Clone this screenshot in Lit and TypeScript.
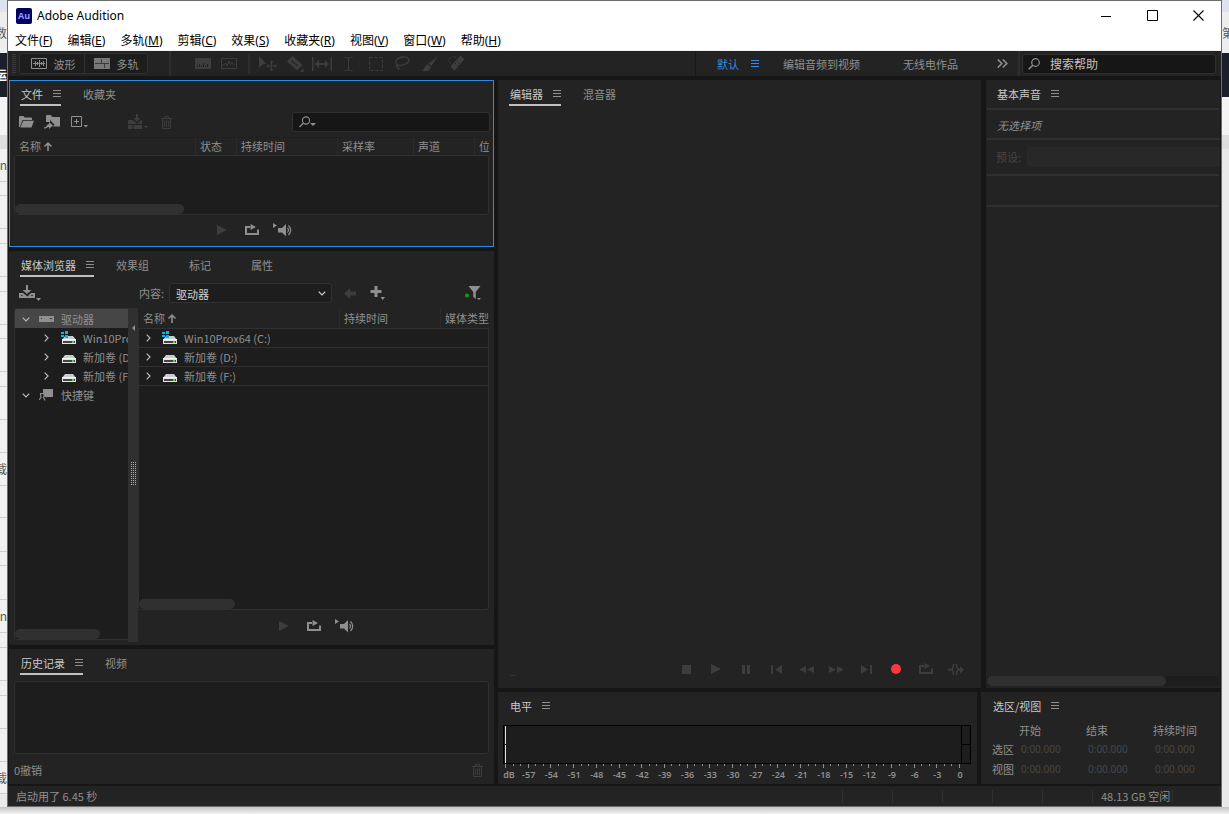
import { LitElement, html, svg, css, TemplateResult } from "lit";
import { customElement, state } from "lit/decorators.js";
import { classMap } from "lit/directives/class-map.js";

const glyph = (w: number, h: number, body: TemplateResult) =>
  html`<svg class="glyph" width=${w} height=${h} viewBox="0 0 ${w} ${h}" fill="currentColor" aria-hidden="true">${body}</svg>`;

const icons = {
  menu: glyph(8, 8, svg`<path d="M0 0h8v1H0zM0 3h8v1H0zM0 6h8v1H0z"/>`),
  logo: html`<svg width="16" height="16" viewBox="0 0 16 16" role="img" aria-label="Audition">
    <rect width="16" height="16" rx="2" fill="#00005b"/>
    <text x="8" y="11" text-anchor="middle" font-family="Open Sans, sans-serif" font-size="9" font-weight="700" fill="#9999ff">Au</text></svg>`,
  minimize: glyph(10, 10, svg`<path d="M0 5h10v1H0z"/>`),
  maximize: glyph(11, 11, svg`<path d="M.5.5h10v10H.5z" fill="none" stroke="currentColor"/>`),
  close: glyph(11, 11, svg`<path d="M.5.5l10 10M10.500.5l-10 10" fill="none" stroke="currentColor" stroke-width="1.100"/>`),
  wave: glyph(16, 12, svg`<path d="M.5.5h15v10H.5z" fill="none" stroke="currentColor"/><path d="M2 5h12v1H2zM4 3h1v5H4zM6 4h1v3H6zM8 2h1v7H8zM10 4h1v3h-1zM12 3h1v5h-1z"/>`),
  multi: glyph(16, 12, svg`<path d="M0 0h16v11H0z" fill="#787878"/><path d="M7.500 1v4M1 5.500h14M10.500 6v4" stroke="#3a3a3a" fill="none"/>`),
  spectral: glyph(16, 12, svg`<path d="M0 0h16v11H0z"/><path d="M2.500 9V7M4.500 9V6M6.500 9V7M8.500 9V5M10.500 9V7M12.500 9V6" stroke="#232323"/>`),
  pitch: glyph(16, 12, svg`<path d="M.5.5h15v10H.5z" fill="none" stroke="currentColor"/><path d="M1 7h2l1.500-2 1.500 3 2-5 1.500 4 1.500-3 1.500 3 1-1h1.500" fill="none" stroke="currentColor"/>`),
  move: glyph(18, 16, svg`<path d="M0 0v12l3.500-3.500 4-.5z"/><path d="M12.500 4l-2 2.500H12V9.500H9.500V8L7 10l2.500 2v-1.500H12V13h-1.500l2 2.500 2-2.500H13v-2.500h2.500V12l2.500-2-2.500-2v1.500H13v-3h1.500z"/>`),
  razor: glyph(18, 18, svg`<path d="M6.500 1L1 6.500l10 9 5.500-5.500z"/><path d="M5.500 5.500l6 5.500" stroke="#232323" stroke-width="1.800" stroke-dasharray="2 .8"/><path d="M17.500 13v4h-4z"/>`),
  slip: glyph(20, 14, svg`<path d="M0 0h1.500v14H0zM18.500 0H20v14h-1.500zM3 7l4-4v3h6V3l4 4-4 4V8H7v3z"/>`),
  ibeam: glyph(9, 14, svg`<path d="M.5.5h2q2 0 2 2v9q0 2-2 2h-2M8.500.5h-2q-2 0-2 2v9q0 2 2 2h2" fill="none" stroke="currentColor"/>`),
  marquee: glyph(14, 14, svg`<path d="M.5.5h13v13H.5z" fill="none" stroke="currentColor" stroke-dasharray="3 2"/>`),
  lasso: glyph(17, 15, svg`<path d="M4 9C-1 6 3 1.500 9 1s8 4 3.500 6.500S6 10 4 9c-2 0-2.500 2 0 2.500S3.500 14 3.500 14" fill="none" stroke="currentColor" stroke-width="1.300"/>`),
  brush: glyph(16, 16, svg`<path d="M16 0L9.500 10 6.500 7.500zM6 8.500L9 11c-1 4-5 5-9 4 2.500-1.500 2-6 6-6.500z"/>`),
  heal: glyph(17, 17, svg`<path d="M12.500.5l4 4L6.500 15.500l-4-4z"/><path d="M9 6.500h1M11 8.500h1M7 8.500h1M9 10.500h1" stroke="#232323" stroke-width="1.200"/><path d="M8 2.500A4 4 0 1 0 2.500 9" fill="none" stroke="currentColor" stroke-width="1.200" stroke-dasharray="1.200 1.200"/>`),
  more: glyph(11, 9, svg`<path d="M.8.5L4.800 4.500l-4 4M5.800.5l4 4-4 4" fill="none" stroke="currentColor" stroke-width="1.600"/>`),
  search: glyph(12, 12, svg`<circle cx="7.500" cy="4.500" r="3.800" fill="none" stroke="currentColor" stroke-width="1.200"/><path d="M4.800 7.200L.7 11.300" stroke="currentColor" stroke-width="1.600"/>`),
  searchMenu: glyph(18, 12, svg`<circle cx="7" cy="4.500" r="3.600" fill="none" stroke="currentColor" stroke-width="1.100"/><path d="M4.500 7L.5 11" stroke="currentColor" stroke-width="1.300"/><path d="M11 7h6l-3 3z"/>`),
  folder: glyph(15, 12, svg`<path d="M0 11V1q0-1 1-1h3.500l1 1.500H12q1 0 1 1V4H3.500L1 11z"/><path d="M4.200 4.800H15L12.500 11.500H1.500z"/>`),
  importFile: glyph(17, 14, svg`<path d="M2 6V1q0-1 1-1h4l1 2h8v9.500H9l1.500-2L6 5v2H2z"/><path d="M0 12.500c2.500 0 3-3.500 5-3.500V7l4 3.500-4 3.500v-2c-2 0-2 1.500-5 1.500z"/>`),
  newItem: glyph(17, 12, svg`<path d="M.5.5h10v10H.5z" fill="none" stroke="currentColor"/><path d="M5 3h1v2h2v1H6v2H5V6H3V5h2zM12.500 9H17l-2.200 2.500z"/>`),
  insert: glyph(20, 16, svg`<path d="M0 6h5l4 4 4-4h1v9H0z"/><path d="M0 10.500h14M5 11v4M9.500 6v4" stroke="#232323" fill="none"/><path d="M8 0h2v4h2.500L9 8 5.500 4H8zM16 12h4l-2 2.500z"/>`),
  trash: glyph(11, 13, svg`<path d="M0 2.500h11M3.500 2V.5h4V2M1.500 3v9.500h8V3M3.500 4.500V11M5.500 4.500V11M7.500 4.500V11" fill="none" stroke="currentColor"/>`),
  up: glyph(8, 9, svg`<path d="M4 0l4 4-1 1-2.200-2V9H3.200V3L1 5 0 4z"/>`),
  play: glyph(10, 10, svg`<path d="M0 0l10 5-10 5z"/>`),
  loop: glyph(14, 12, svg`<path d="M5 3H1v7h12V5.500" fill="none" stroke="currentColor" stroke-width="2"/><path d="M5.500 0l5.500 3-5.500 3z"/>`),
  speaker: glyph(20, 14, svg`<path d="M0 0l4 2.500-4 2.500zM5 5h4l4-4v12.500l-4-4H5z"/><path d="M14.500 5q2 2 0 4.500M15.500 2.500q4.500 4.500 0 9.500" fill="none" stroke="currentColor" stroke-width="1.200"/>`),
  drive: glyph(22, 16, svg`<path d="M0 8h4l4.500 3.500L12 8h4v5H0z"/><path d="M7 0h2v5h3.500L8 9 3.500 5H7z"/><path d="M12 10.500h2M2 10.500h1.500" stroke="#333"/><path d="M17 13h5l-2.500 3z"/>`),
  back: glyph(12, 11, svg`<path d="M0 5.500L6 0v3.500h6v4H6V11z"/>`),
  plus: glyph(15, 14, svg`<path d="M4.500 0h3v4h4v3h-4v4h-3V7h-4V4h4zM10.500 11H15l-2.200 3z"/>`),
  filter: glyph(17, 14, svg`<path d="M3.500 0h12L10.800 6v7L8.200 11V6z"/><circle cx="2" cy="9.500" r="2" fill="#169a16"/><path d="M12 12h4l-2 2z"/>`),
  down: glyph(8, 5, svg`<path d="M.7.7L4 4 7.300.7" fill="none" stroke="currentColor" stroke-width="1.200"/>`),
  right: glyph(5, 8, svg`<path d="M.7.700L4 4 .7 7.300" fill="none" stroke="currentColor" stroke-width="1.200"/>`),
  drives: glyph(15, 6, svg`<path d="M0 0h15v6H0z"/><path d="M2 2h1v1H2zM11 2h2v1h-2z" fill="#333"/>`),
  disk: html`<svg class="glyph" width="15" height="14" viewBox="-1 0 15 14" aria-hidden="true"><path d="M3 5h8l3 4H0z" fill="#c9ccd0"/><path d="M0 8h14v1H0z" fill="#f4f4f4"/><path d="M0 9h14v4H0z" fill="#e3e3e3"/><path d="M1 10h12v2H1z" fill="#454545"/><path d="M10 10h2v2h-2z" fill="#3fd24a"/></svg>`,
  system: html`<svg class="glyph" width="15" height="14" viewBox="0 0 15 14" aria-hidden="true"><path d="M4 5h8l3 4H1z" fill="#c9ccd0"/><path d="M1 8h14v1H1z" fill="#f4f4f4"/><path d="M1 9h14v4H1z" fill="#e3e3e3"/><path d="M2 10h12v2H2z" fill="#454545"/><path d="M11 10h2v2h-2z" fill="#3fd24a"/><path d="M0 1h3v2H0zM4 0h3v3H4zM0 4h3v2H0zM4 4h3v3H4z" fill="#00b7ef"/></svg>`,
  shortcut: glyph(14, 12, svg`<path d="M4 0h10v8H6.500L4 5z"/><path d="M0 11l2-2.500L1.500 4.500l3.500 0L7 7.500 5 7 4.500 8.500 6 11.500" fill="none" stroke="currentColor" stroke-width="1.200"/>`),
  stop: glyph(9, 9, svg`<path d="M0 0h9v9H0z"/>`),
  pause: glyph(8, 9, svg`<path d="M0 0h3v9H0zM5 0h3v9H5z"/>`),
  toStart: glyph(11, 9, svg`<path d="M0 0h2v9H0zM11 0v9L4 4.500z"/>`),
  rewind: glyph(15, 7, svg`<path d="M7 0v7L0 3.500zM15 0v7L8 3.500z"/>`),
  forward: glyph(15, 7, svg`<path d="M0 0v7l7-3.500zM8 0v7l7-3.500z"/>`),
  toEnd: glyph(11, 9, svg`<path d="M9 0h2v9H9zM0 0v9l7-4.500z"/>`),
  record: glyph(10, 10, svg`<circle cx="5" cy="5" r="5" fill="#f93a3a"/>`),
  skip: glyph(16, 11, svg`<path d="M0 4.700h3v2H0zM10 4.700h3v2h-3z"/><path d="M5.500 0q0 5-2.500 5.500Q5.500 6 5.500 11M8.500 0q0 5 2.500 5.500Q8.500 6 8.500 11" fill="none" stroke="currentColor" stroke-width="1.500"/><path d="M12 2l4 3.700L12 9.500z"/>`),
  collapse: glyph(3, 6, svg`<path d="M3 0v6L0 3z"/>`),
};

type IconName = keyof typeof icons;

const MENUS = [["文件", "F"], ["编辑", "E"], ["多轨", "M"], ["剪辑", "C"], ["效果", "S"], ["收藏夹", "R"], ["视图", "V"], ["窗口", "W"], ["帮助", "H"]];
const TOOLS: [IconName, string][] = [["move", "移动"], ["razor", "剃刀"], ["slip", "滑动"], ["ibeam", "时间选择"], ["marquee", "框选"], ["lasso", "套索"], ["brush", "画笔"], ["heal", "污点修复"]];
const TRANSPORT: [IconName, string][] = [["stop", "停止"], ["play", "播放"], ["pause", "暂停"], ["toStart", "移到上一个"], ["rewind", "快退"], ["forward", "快进"], ["toEnd", "移到下一个"], ["record", "录制"], ["loop", "循环播放"], ["skip", "跳过所选项目"]];
const DRIVES: { icon: IconName; name: string }[] = [{ icon: "system", name: "Win10Prox64 (C:)" }, { icon: "disk", name: "新加卷 (D:)" }, { icon: "disk", name: "新加卷 (F:)" }];
const LEVELS = Array.from({ length: 20 }, (_, i) => (i === 0 ? "dB" : String(i * 3 - 60)));

// Rows of the page that lies behind the window: height and the text that ends each one.
const BEHIND: [number, string][] = [
  [33, "n"], [14, ""], [33, ""], [15, ""], [33, ""], [15, ""], [33, ""], [14, ""], [33, ""], [15, ""], [33, ""], [33, ""],
  [33, "载"], [32, ""], [34, ""], [14, ""], [34, ""], [33, "n"], [15, ""], [33, ""], [15, ""], [33, ""], [33, ""], [32, "载"],
];

@customElement("app-root")
export class AppRoot extends LitElement {
  @state() private view = "波形";

  static styles = css`
    :host { display: block; height: 100vh; overflow: hidden; color: #8f8f8f;
      font: 11px/20px "Noto Sans CJK SC", "Noto Sans", sans-serif; }
    * { box-sizing: border-box; }
    button, input, select { font: inherit; color: inherit; border: 0; background: none; padding: 0; margin: 0; }
    button { display: inline-flex; align-items: center; justify-content: center; white-space: nowrap; }
    a { color: inherit; text-decoration: none; }
    table { border-spacing: 0; table-layout: fixed; width: 100%; }
    th, td { padding: 0; font-weight: 400; text-align: left; white-space: nowrap; overflow: hidden; }
    .glyph { display: block; flex: none; }
    .desk { display: grid; grid-template-columns: 7px minmax(0, 1fr) 7px; grid-template-rows: minmax(0, 1fr) 7px; height: 100%; background: #e9e9e9; }
    .edge { display: flex; flex-direction: column; overflow: hidden; font-size: 12px; color: #555; white-space: nowrap; }
    .edge span { display: flex; align-items: center; justify-content: flex-end; flex: none; }
    .edge-right span { justify-content: flex-start; }
    .sky { height: 12px; background: #dce2ee; }
    .head { height: 41px; background: #ededed; }
    .ink { height: 44px; background: #1c1f2b; color: #fff; font-weight: 700; }
    .page { height: 38px; background: #f4f4f4; }
    .strip { height: 14px; background: #dedede; }
    .line { border-bottom: 1px solid #cfcfcf; background: #f1f1f1; }
    .below { grid-column: 1 / -1; background: linear-gradient(#c4c4c4, #f2f2f2); }
    .window { display: flex; flex-direction: column; min-height: 0; border: 1px solid #6d6d6d; background: #161616; }

    .title { display: flex; align-items: center; height: 29px; padding-left: 8px; gap: 5px; background: #fff; color: #000; }
    .title h1 { flex: 1; margin: 0; font: 400 12px/20px "Noto Sans", sans-serif; }
    .caption { display: flex; }
    .caption button { width: 46px; height: 29px; }
    .menubar { display: flex; align-items: center; gap: 15px; height: 21px; padding: 2px 7px 0; background: #fff; border-bottom: 1px solid #f0f0f0; color: #000; font: 12px/18px "Noto Sans", "Noto Sans CJK SC", sans-serif; }
    .tools { display: flex; align-items: center; height: 25px; background: #232323; flex: none; }
    .grip { width: 4px; height: 19px; margin: 0 3px 0 4px; background: repeating-linear-gradient(#3a3a3a 0 1px, transparent 1px 2px); }
    .modes { display: flex; height: 21px; border: 1px solid #303030; border-radius: 3px; background: #1d1d1d; }
    .modes button { gap: 7px; width: 64px; }
    .modes button:first-child { padding-left: 2px; }
    .modes button + button { border-left: 1px solid #303030; width: 63px; }
    .bar { width: 2px; height: 25px; background: #2e2e2e; }
    .short { height: 20px; }
    .dim { color: #3d3d3d; }
    .tool { width: 27px; height: 24px; }
    .toolset { display: flex; }
    .display { padding: 0 6px 0 19px; }
    .display .tool { width: 26px; }
    .mode-gap { width: 21px; }
    .toolset.edit { padding-left: 4px; flex: 1; }
    .spaces { display: flex; align-items: center; border-left: 1px solid #191919; padding-left: 21px; height: 25px; }
    .spaces a { white-space: nowrap; }
    .spaces .current { display: flex; align-items: center; gap: 12px; color: #2d8ceb; margin-right: 24px; }
    .spaces .next { margin-right: 43px; }
    .spaces button { margin: 0 10px 0 39px; }
    .field { display: flex; align-items: center; height: 20px; border: 1px solid #303030; border-radius: 3px; background: #161616; }
    .field input { flex: 1; min-width: 0; outline: 0; }
    .help { width: 194px; margin: 0 5px 0 2px; padding-left: 5px; gap: 10px; font-size: 12px; color: #8f8f8f; }
    .help input::placeholder { color: #c4c4c4; opacity: 1; }

    .workspace { flex: 1; min-height: 0; display: grid; grid-template-columns: 485fr 722fr; gap: 4px; padding: 4px 1px 2px; }
    .left { display: grid; grid-template-rows: 167fr 394fr 135fr; gap: 4px; min-height: 0; min-width: 0; }
    .rightside { display: grid; grid-template-rows: 608fr 92fr; gap: 4px; min-height: 0; min-width: 0; }
    .upper { display: grid; grid-template-columns: 483fr 234fr; gap: 5px; min-height: 0; }
    .lower { display: grid; grid-template-columns: 479fr 239fr; gap: 4px; min-height: 0; }
    .panel { display: flex; flex-direction: column; background: #232323; min-width: 0; min-height: 0; overflow: hidden; }
    .focus { outline: 1px solid #2d8ceb; outline-offset: -1px; }
    .focus .controls { padding-bottom: 2px; }
    .tabs { display: flex; gap: 22px; padding-left: 11px; height: 26px; flex: none; }
    .tabs button { align-items: center; justify-content: flex-start; gap: 10px; padding-top: 4px; padding-right: 18px; border-bottom: 2px solid transparent; }
    .tabs .on { color: #c8c8c8; padding-right: 0; padding-left: 1px; border-color: #c0c0c0; }
    .tabs .on .glyph { color: #8f8f8f; }
    .plain .on { border-color: transparent; }
    .sound .tabs { padding-left: 10px; }
    .row { display: flex; align-items: center; height: 31px; padding: 1px 4px 0 10px; flex: none; }
    .row .grow { flex: 1; }
    .files { gap: 10px; }
    .files .spaced { margin-left: 30px; }
    .files .trash { margin-left: 3px; }
    .find { width: 198px; padding-left: 6px; }
    .listing { display: flex; flex-direction: column; flex: 1; min-height: 0; min-width: 0; }
    .inset { margin: 0 5px; }
    .listing th { height: 18px; line-height: 16px; padding-left: 4px; border-left: 1px solid #2b2b2b; vertical-align: top; }
    .listing th:first-child { border-left: 0; padding-left: 5px; }
    .listing th div { display: flex; align-items: center; gap: 3px; }
    .filehead th { border-top: 1px solid #1f1f1f; }
    .well { flex: 1; min-height: 0; display: flex; flex-direction: column; justify-content: flex-end; background: #1d1d1d; border: 1px solid #303030; border-radius: 3px; }
    .thumb { height: 10px; border-radius: 5px; background: #303030; flex: none; }
    .controls { display: flex; align-items: center; justify-content: center; gap: 18px; height: 32px; flex: none; padding-left: 6px; }
    .controls button:last-child { margin-left: -4px; }
    .source label { margin-left: 98px; }
    .pick { position: relative; display: flex; align-items: center; width: 163px; height: 20px; margin: 0 12px 0 5px; border: 1px solid #303030; border-radius: 3px; background: #1d1d1d; color: #d0d0d0; }
    .pick select { appearance: none; width: 100%; height: 100%; padding-left: 6px; outline: 0; }
    .pick .glyph { position: absolute; right: 5px; pointer-events: none; }
    .source .add { margin-left: 14px; }
    .source .funnel { margin-right: 8px; }
    .browser { display: flex; flex: 1; min-height: 0; padding: 0 5px 3px; }
    .tree { width: 114px; display: flex; flex-direction: column; background: #1d1d1d; border: 1px solid #303030; border-right: 0; border-radius: 3px 0 0 3px; overflow: hidden; margin-bottom: 2px; flex: none; }
    .tree ul { list-style: none; margin: 0; padding: 0; flex: 1; }
    .tree li { display: grid; grid-template-columns: 17px 22px auto; align-items: center; justify-content: start; height: 19px; padding-left: 7px; white-space: nowrap; }
    .tree .child { padding-left: 29px; grid-template-columns: 17px 22px auto; }
    .tree .picked { background: #464646; }
    .twist { color: #b8b8b8; }
    .split { width: 10px; background: #303030; display: flex; flex-direction: column; align-items: center; flex: none; padding-top: 17px; }
    .split .dots { width: 5px; height: 24px; margin-top: 131px; background: repeating-linear-gradient(transparent 0 1px, #303030 1px 2px), repeating-linear-gradient(90deg, #b0b0b0 0 1px, transparent 1px 2px); }
    .media th { height: 20px; line-height: 20px; }
    .media td { height: 19px; line-height: 18px; border-bottom: 1px solid #303030; background: #1d1d1d; }
    .media tr:first-child td { border-top: 1px solid #303030; height: 20px; }
    .media td:first-child { border-left: 1px solid #303030; }
    .media td:last-child { border-right: 1px solid #303030; }
    .media .well { border-top: 0; border-radius: 0 0 3px 3px; }
    .cell { display: grid; grid-template-columns: 16px 22px auto; align-items: center; justify-content: start; padding-left: 7px; height: 18px; }
    .history .well { margin: 6px 5px 0; }
    .history .row { padding: 2px 11px 0 5px; justify-content: space-between; height: 30px; }

    .stage { flex: 1; }
    .transport { display: flex; align-items: center; height: 38px; padding: 0 10px 0 12px; flex: none; }
    .transport span { flex: 1; }
    .transport button { width: 30px; height: 24px; }
    .sound .note { font-style: italic; padding: 5px 10px 3px; border-top: 2px solid #303030; margin: 2px 1px 0; height: 30px; }
    .preset { display: flex; align-items: center; gap: 6px; height: 36px; margin-left: 1px; padding-left: 9px; border-top: 2px solid #303030; color: #464646; }
    .preset input { flex: 1; min-width: 0; height: 20px; background: #282828; border-radius: 3px 0 0 3px; }
    .blank { height: 33px; margin: 0 1px; border: solid #303030; border-width: 2px 0; }
    .track { margin: 0 1px 2px; background: #1d1d1d; }

    .meter { display: grid; grid-template-columns: 1fr 8px; grid-template-rows: 18px 18px; gap: 1px; margin: 7px 6px 0 5px; padding: 1px; background: #000; flex: none; }
    .meter div { background: #1d1d1d; }
    .meter .lead { grid-row: span 2; display: flex; flex-direction: column; gap: 1px; padding-left: 1px; }
    .meter .lead i { width: 1px; flex: 1; background: #ff0; }
    .scale { display: flex; padding: 0 17px 0 7px; font-size: 9px; line-height: 14px; color: #8f8f8f; }
    .mark { flex: 1; min-width: 0; }
    .ticks { display: grid; grid-template-columns: repeat(3, 1fr); height: 4px; }
    .ticks i { border-left: 1px solid #8f8f8f; height: 2px; }
    .ticks i:first-child { height: 4px; }
    .mark b { display: block; width: 24px; margin-left: -11px; text-align: center; font: 600 9px/14px "Noto Sans", sans-serif; }
    .mark:first-child b { margin-left: -8px; }
    .mark.last { flex: 0 0 1px; }
    .range { margin: 2px 0 0 11px; width: auto; }
    .range th { height: 20px; line-height: 20px; }
    .range tr > :nth-child(2), .range tr > :nth-child(3) { width: 67px; }
    .range tr > :first-child { width: 27px; }
    .range tbody th { height: 22px; line-height: 22px; }
    .range tbody tr:first-child th { height: 18px; line-height: 18px; }
    .range td { padding-left: 2px; font: 10px/18px "Noto Sans", sans-serif; color: #464646; }

    .status { display: flex; align-items: center; height: 20px; padding: 0 48px 0 8px; background: #232323; flex: none; }
    .status > span:first-child { flex: 1; }
    .status i { width: 50px; height: 13px; border-left: 1px solid #303030; }
    .status .free { width: 81px; height: 13px; line-height: 13px; padding-left: 8px; border: solid #303030; border-width: 0 1px; white-space: nowrap; }
  `;

  private btn(icon: IconName, label: string, cls = "") {
    return html`<button class=${cls} aria-label=${label}>${icons[icon]}</button>`;
  }

  private tabs(active: string, others: string[] = []) {
    return html`<nav class=${classMap({ tabs: true, plain: others.length === 0 })}>
      <button class="on">${active}${icons.menu}</button>
      ${others.map((t) => html`<button>${t}</button>`)}
    </nav>`;
  }

  private preview() {
    return html`<div class="controls">
      ${this.btn("play", "播放", "dim")}${this.btn("loop", "循环播放")}${this.btn("speaker", "自动播放")}
    </div>`;
  }

  private edge(side: string, top: string, dark: string, rows: [number, string][]) {
    return html`<div class="edge edge-${side}" aria-hidden="true">
      <span class="sky"></span><span class="head">${top}</span><span class="ink">${dark}</span>
      <span class="page"></span><span class="strip"></span>
      ${rows.map(([h, text]) => html`<span class="line" style="height:${h}px">${text}</span>`)}
    </div>`;
  }

  private filesPanel() {
    return html`<section class="panel focus">
      ${this.tabs("文件", ["收藏夹"])}
      <div class="row files">
        ${this.btn("folder", "打开文件")}${this.btn("importFile", "导入文件")}${this.btn("newItem", "新建")}
        ${this.btn("insert", "插入到多轨", "dim spaced")}${this.btn("trash", "删除", "dim trash")}
        <span class="grow"></span>
        <label class="field find">${icons.searchMenu}<input type="text" aria-label="搜索文件" /></label>
      </div>
      <div class="listing inset">
        <table class="filehead">
          <colgroup><col style="width:181px" /><col style="width:41px" /><col style="width:101px" /><col style="width:76px" /><col style="width:61px" /><col /></colgroup>
          <thead><tr><th><div>名称${icons.up}</div></th><th>状态</th><th>持续时间</th><th>采样率</th><th>声道</th><th>位</th></tr></thead>
        </table>
        <div class="well"><div class="thumb" style="width:169px"></div></div>
      </div>
      ${this.preview()}
    </section>`;
  }

  private mediaPanel() {
    return html`<section class="panel">
      ${this.tabs("媒体浏览器", ["效果组", "标记", "属性"])}
      <div class="row source">
        ${this.btn("drive", "导入")}
        <label for="content">内容:</label>
        <span class="pick"><select id="content"><option>驱动器</option></select>${icons.down}</span>
        ${this.btn("back", "后退", "dim")}${this.btn("plus", "添加快捷键", "add")}
        <span class="grow"></span>
        ${this.btn("filter", "筛选", "funnel")}
      </div>
      <div class="browser">
        <div class="tree">
          <ul>
            <li class="picked"><span class="twist">${icons.down}</span>${icons.drives}<span>驱动器</span></li>
            ${DRIVES.map((d) => html`<li class="child"><span class="twist">${icons.right}</span>${icons[d.icon]}<span>${d.name}</span></li>`)}
            <li><span class="twist">${icons.down}</span>${icons.shortcut}<span>快捷键</span></li>
          </ul>
          <div class="thumb" style="width:85px"></div>
        </div>
        <div class="split">${icons.collapse}<span class="dots"></span></div>
        <div class="listing media">
          <table>
            <colgroup><col style="width:201px" /><col style="width:101px" /><col /></colgroup>
            <thead><tr><th><div>名称${icons.up}</div></th><th>持续时间</th><th>媒体类型</th></tr></thead>
            <tbody>${DRIVES.map((d) => html`<tr><td colspan="3"><div class="cell"><span class="twist">${icons.right}</span>${icons[d.icon]}<span>${d.name}</span></div></td></tr>`)}</tbody>
          </table>
          <div class="well"><div class="thumb" style="width:96px"></div></div>
          ${this.preview()}
        </div>
      </div>
    </section>`;
  }

  render() {
    return html`<div class="desk">
      ${this.edge("left", "数", "运", BEHIND)}
      <main class="window">
        <header class="title">
          ${icons.logo}<h1>Adobe Audition</h1>
          <div class="caption">${this.btn("minimize", "最小化")}${this.btn("maximize", "最大化")}${this.btn("close", "关闭")}</div>
        </header>
        <nav class="menubar">${MENUS.map(([t, k]) => html`<button>${t}(<u>${k}</u>)</button>`)}</nav>
        <div class="tools">
          <span class="grip"></span>
          <div class="modes">
            <button @click=${() => (this.view = "波形")} aria-pressed=${this.view === "波形"}>${icons.wave}波形</button>
            <button @click=${() => (this.view = "多轨")} aria-pressed=${this.view === "多轨"}>${icons.multi}多轨</button>
          </div>
          <span class="mode-gap"></span><span class="bar"></span>
          <div class="toolset display dim">${this.btn("spectral", "频谱", "tool")}${this.btn("pitch", "音高", "tool")}</div>
          <span class="bar short"></span>
          <div class="toolset edit dim">${TOOLS.map(([i, l]) => this.btn(i, l, "tool"))}</div>
          <nav class="spaces">
            <a href="#" class="current">默认${icons.menu}</a><a href="#" class="next">编辑音频到视频</a><a href="#">无线电作品</a>
            ${this.btn("more", "更多")}
          </nav>
          <span class="bar"></span>
          <label class="field help">${icons.search}<input type="text" placeholder="搜索帮助" aria-label="搜索帮助" /></label>
        </div>
        <div class="workspace">
          <div class="left">
            ${this.filesPanel()}${this.mediaPanel()}
            <section class="panel history">
              ${this.tabs("历史记录", ["视频"])}
              <div class="well"></div>
              <div class="row"><span>0撤销</span>${this.btn("trash", "删除历史", "dim")}</div>
            </section>
          </div>
          <div class="rightside">
            <div class="upper">
              <section class="panel">
                ${this.tabs("编辑器", ["混音器"])}
                <div class="stage"></div>
                <div class="transport dim"><span>_</span>${TRANSPORT.map(([i, l]) => this.btn(i, l))}</div>
              </section>
              <section class="panel sound">
                ${this.tabs("基本声音")}
                <div class="note">无选择项</div>
                <div class="preset"><label for="preset">预设:</label><input id="preset" type="text" disabled /></div>
                <div class="blank"></div>
                <div class="stage"></div>
                <div class="track"><div class="thumb" style="width:179px"></div></div>
              </section>
            </div>
            <div class="lower">
              <section class="panel">
                ${this.tabs("电平")}
                <div class="meter"><div class="lead"><i></i><i></i></div><div></div><div></div></div>
                <div class="scale">
                  ${LEVELS.map((l) => html`<div class="mark"><div class="ticks"><i></i><i></i><i></i></div><b>${l}</b></div>`)}
                  <div class="mark last"><div class="ticks"><i></i></div><b>0</b></div>
                </div>
              </section>
              <section class="panel">
                ${this.tabs("选区/视图")}
                <table class="range">
                  <thead><tr><th></th><th>开始</th><th>结束</th><th>持续时间</th></tr></thead>
                  <tbody>${["选区", "视图"].map((r) => html`<tr><th>${r}</th><td>0:00.000</td><td>0:00.000</td><td>0:00.000</td></tr>`)}</tbody>
                </table>
              </section>
            </div>
          </div>
        </div>
        <footer class="status"><span>启动用了 6.45 秒</span><i></i><i></i><i></i><i></i><i></i><span class="free">48.13 GB 空闲</span></footer>
      </main>
      ${this.edge("right", "第", "", [])}
      <div class="below"></div>
    </div>`;
  }
}
